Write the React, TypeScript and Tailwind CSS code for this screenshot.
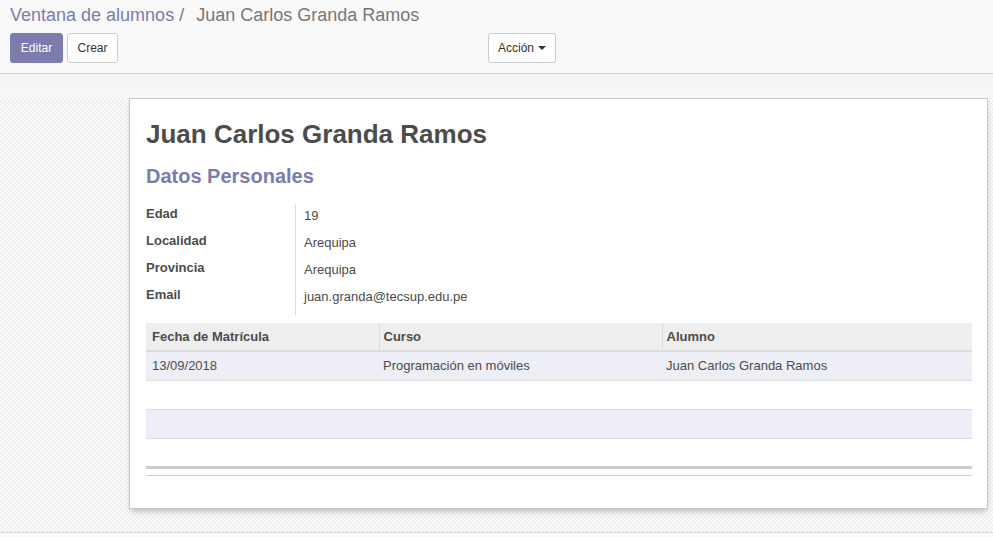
import React from 'react';

const fields = [
  { label: 'Edad', value: '19' },
  { label: 'Localidad', value: 'Arequipa' },
  { label: 'Provincia', value: 'Arequipa' },
  { label: 'Email', value: 'juan.granda@tecsup.edu.pe' },
];

export default function App() {
  return (
    <div className="w-[993px] h-[537px] overflow-hidden bg-[#f9f9f9] text-[13px] text-[#4c4c4c] font-['Liberation_Sans',Arial,sans-serif]">
      {/* control panel */}
      <div className="h-[74px] border-b border-[#cfcfcf] px-[10px] pt-[4px]">
        <div className="flex items-center h-[22px] text-[18px] leading-[22px]">
          <span className="text-[#7c7bad]">Ventana de alumnos</span>
          <span className="text-[#777] ml-[5px] mr-[12px]">/</span>
          <span className="text-[#777]">Juan Carlos Granda Ramos</span>
        </div>
        <div className="flex items-center mt-[7px]">
          <button className="h-[30px] w-[53px] rounded-[3px] bg-[#7c7bad] text-white text-[12px] border border-[#7c7bad]">
            Editar
          </button>
          <button className="h-[30px] w-[51px] ml-[4px] rounded-[3px] bg-white text-[#333] text-[12px] border border-[#ccc]">
            Crear
          </button>
          <button className="h-[30px] w-[68px] ml-[370px] rounded-[3px] bg-white text-[#333] text-[12px] border border-[#ccc] flex items-center justify-center gap-[4px]">
            Acción
            <svg width="8" height="4" viewBox="0 0 8 4"><path d="M0 0h8L4 4z" fill="#333" /></svg>
          </button>
        </div>
      </div>

      {/* form background */}
      <div className="h-[24px] bg-gradient-to-b from-[#f4f4f4] to-[#f7f7f7]" />
      <div className="h-[435px] border-b border-[#dcdcdc] bg-[repeating-conic-gradient(#efefef_0_25%,#f9f9f9_0_50%)] bg-[length:4px_4px]">
        <div className="ml-[129px] mr-[5px] h-[411px] bg-white border border-[#c8c8d3] shadow-[0_4px_6px_-2px_rgba(0,0,0,0.25)] px-[16px] pt-[18px]">
          <h1 className="text-[26px] font-bold leading-[34px] text-[#4c4c4c]">Juan Carlos Granda Ramos</h1>
          <h2 className="mt-[12px] text-[20px] font-bold leading-[26px] text-[#7c7bad]">Datos Personales</h2>

          <div className="mt-[15px] grid grid-cols-[150px_1fr] w-[826px]">
            <div className="border-r border-[#ddd] pt-[1px]">
              {fields.map((f) => (
                <div key={f.label} className="h-[27px] font-bold leading-[18px]">{f.label}</div>
              ))}
            </div>
            <div className="pl-[8px] pt-[3px]">
              {fields.map((f) => (
                <div key={f.label} className="h-[27px] leading-[18px]">{f.value}</div>
              ))}
            </div>
          </div>

          <table className="mt-[8px] w-[826px] border-collapse">
            <thead>
              <tr className="bg-[#eeeeee] h-[28px] border-b-2 border-[#dcdcdc]">
                <th className="text-left font-bold px-[6px] w-[233px] border-r border-[#dcdcdc]">Fecha de Matrícula</th>
                <th className="text-left font-bold px-[4px] w-[283px] border-r border-[#dcdcdc]">Curso</th>
                <th className="text-left font-bold px-[4px]">Alumno</th>
              </tr>
            </thead>
            <tbody>
              <tr className="bg-[#eeeef6] h-[29px] border-b border-[#dcdcdc]">
                <td className="px-[6px]">13/09/2018</td>
                <td className="px-[4px]">Programación en móviles</td>
                <td className="px-[4px]">Juan Carlos Granda Ramos</td>
              </tr>
              <tr className="bg-white h-[29px] border-b border-[#dcdcdc]"><td colSpan={3} /></tr>
              <tr className="bg-[#eeeef6] h-[29px] border-b border-[#dcdcdc]"><td colSpan={3} /></tr>
              <tr className="bg-white h-[29px]"><td colSpan={3} /></tr>
            </tbody>
            <tfoot>
              <tr className="h-[8px] border-t-[3px] border-b border-[#cccccc]"><td colSpan={3} /></tr>
            </tfoot>
          </table>
        </div>
      </div>
    </div>
  );
}
